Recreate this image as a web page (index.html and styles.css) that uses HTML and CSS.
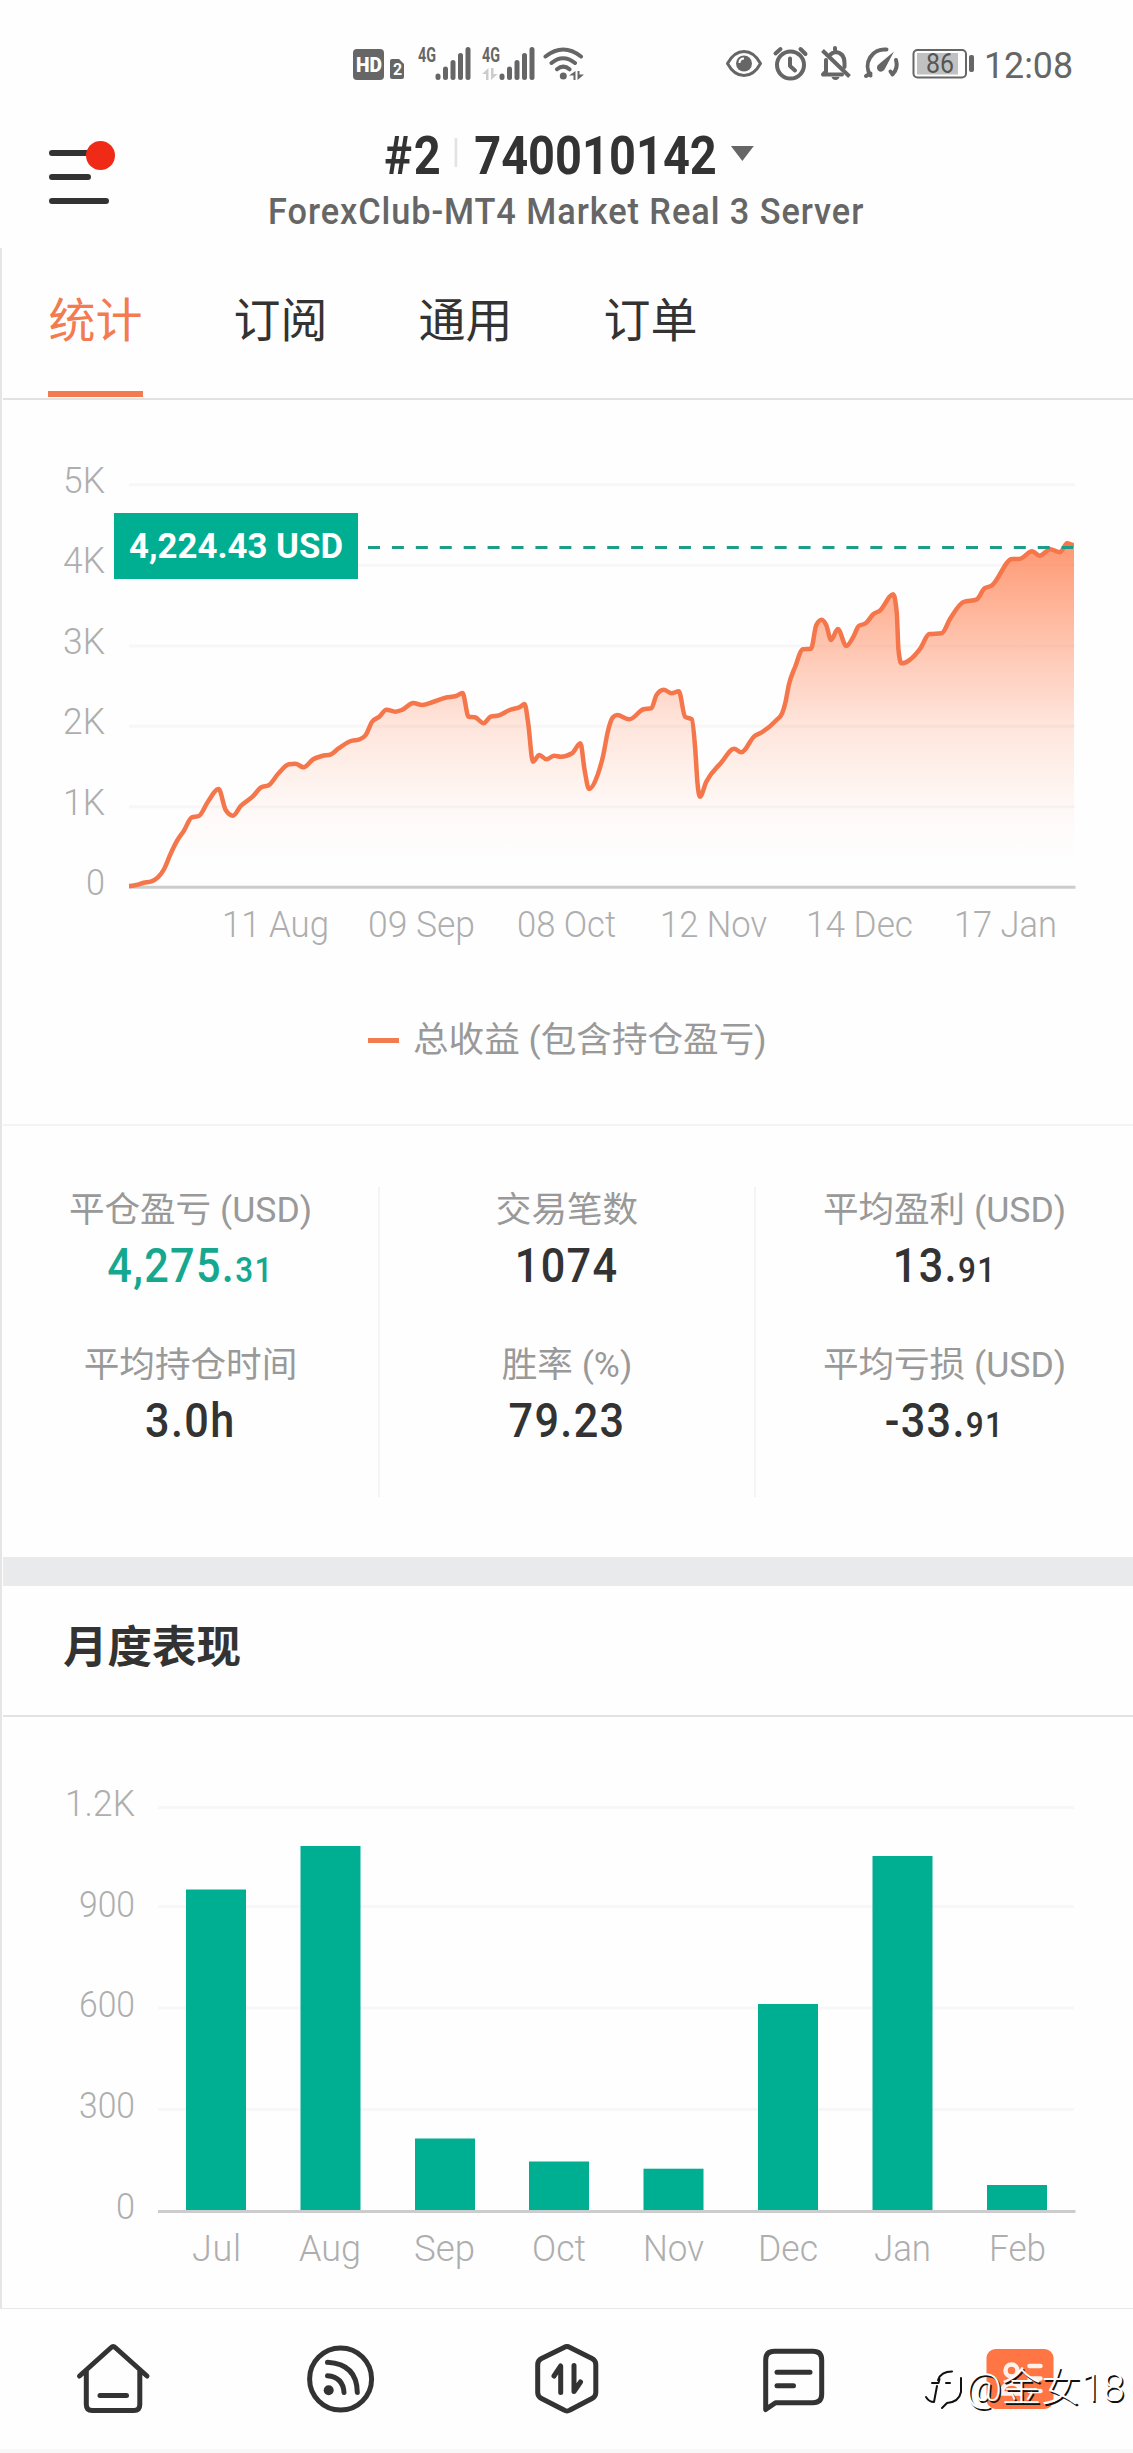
FILE: index.html
```html
<!DOCTYPE html>
<html lang="zh-CN">
<head>
<meta charset="utf-8">
<title>统计</title>
<link rel="stylesheet" href="styles.css">
</head>
<body>
<div class="status">
  <svg class="status-left" width="240" height="44" viewBox="345 40 240 44">
    <rect x="353" y="49" width="31" height="31" rx="4" fill="#666"/>
    <text x="356" y="71.5" class="hd" textLength="26" lengthAdjust="spacingAndGlyphs">HD</text>
    <path d="M392 59h7l5 5v13a2 2 0 0 1-2 2h-10a2 2 0 0 1-2-2V61a2 2 0 0 1 2-2z" fill="#666"/>
    <text x="393" y="75" class="sim">2</text>
    <text x="418" y="61.7" class="net" textLength="18" lengthAdjust="spacingAndGlyphs">4G</text>
    <g class="bars"><path d="M438 76v1.5M445.5 69v8.5M453 62.500v15M460.500 55.500v22M468 49.500v28"/></g>
    <text x="482" y="61.7" class="net" textLength="18" lengthAdjust="spacingAndGlyphs">4G</text>
    <g class="bars"><path d="M502 76v1.500M509.500 69v8.500M517 62.500v15M524.500 55.500v22M532 49.500v28"/></g>
    <path d="M488.500 68v12h-2.500v-6h-4zM491 80V68h2.500v6h4z" fill="#ccc"/>
    <g fill="none" stroke="#666" stroke-width="4" stroke-linecap="round"><path d="M545.500 56.500q17.800-14 35.500 0M551.500 63q11.500-9.500 23.500 0M557 69.300q6.300-5.500 12.500 0"/></g>
    <circle cx="563.300" cy="76" r="3.500" fill="#666"/>
    <path d="M575.500 71v9h-2v-4.500h-4.500zM577.500 80v-9h2v3.500h4.500z" fill="#666"/>
  </svg>
  <svg class="status-right" width="364" height="44" viewBox="720 40 364 44">
    <g fill="none" stroke="#666" stroke-width="3" stroke-linecap="round" stroke-linejoin="round">
      <path d="M727.500 63.500Q734 51.500 744 51.500T760.500 63.500Q754 75.500 744 75.500T727.500 63.500z"/>
      <circle cx="790.500" cy="65" r="13.500" stroke-width="4"/>
      <path d="M790 58.500v7.500l5 4.500M775.500 53.500l5-4.500M800.500 49l5 5" stroke-width="4"/>
      <path d="M822.500 50.500l27 26" stroke-width="4" stroke-linecap="butt"/>
      <path d="M826 60v11.500q-2 2-3 3h19M830.500 54.500q2-2 5-2.500M835 50v-2M835.500 52q9 1 9 11v4" stroke-width="4"/>
      <path d="M870.500 75.500a16.700 16.700 0 0 1 16-25.900M866 76l4.500-2.500M896 60q2.500 8-3.500 14.500l-2-3" stroke-width="4"/>
      <rect x="913.500" y="50" width="52.500" height="27.500" rx="4" stroke-width="2"/>
    </g>
    <circle cx="744" cy="63.500" r="8" fill="#666"/><path d="M739.500 63q0-4.500 4.500-4.500" fill="none" stroke="#fff" stroke-width="2"/>
    <path d="M831.500 77h8q-1 3-4 3t-4-3z" fill="#666"/>
    <path d="M894 51.500l-9.500 18a4 4 0 1 1-6-5z" fill="#666"/>
    <rect x="917" y="53" width="41" height="21.500" fill="#c1c1c1"/>
    <text x="926" y="73" class="batt" textLength="28" lengthAdjust="spacingAndGlyphs">86</text>
    <rect x="969" y="55" width="5" height="17" rx="2" fill="#666"/>
    <text x="984" y="78" class="clock" textLength="89" lengthAdjust="spacingAndGlyphs">12:08</text>
  </svg>
</div>

<header class="header">
  <svg class="menu" width="72" height="76" viewBox="46 140 72 76">
    <path d="M52 153h48M52 177h36M52 201h54" stroke="#333" stroke-width="6" stroke-linecap="round"/>
    <circle cx="100.500" cy="155.500" r="14.500" fill="#ef2b18"/>
  </svg>
  <div class="account">
    <div class="title"><span class="rank">#2</span><i class="sep"></i><span>740010142</span><i class="caret"></i></div>
    <div class="server">ForexClub-MT4 Market Real 3 Server</div>
  </div>
</header>

<main class="content">
  <nav class="tabs">
    <a class="tab active">统计</a><a class="tab">订阅</a><a class="tab">通用</a><a class="tab">订单</a>
  </nav>

  <section class="profit">
    <svg width="1130" height="560" viewBox="3 400 1130 560">
      <defs>
        <linearGradient id="fade" gradientUnits="userSpaceOnUse" x1="0" y1="543" x2="0" y2="887">
          <stop offset="0" stop-color="#ff7441" stop-opacity=".74"/>
          <stop offset=".3" stop-color="#ff7441" stop-opacity=".41"/>
          <stop offset=".53" stop-color="#ff7441" stop-opacity=".18"/>
          <stop offset=".77" stop-color="#ff7441" stop-opacity=".04"/>
          <stop offset=".92" stop-color="#ff7441" stop-opacity="0"/>
        </linearGradient>
      </defs>
      <path class="grid" d="M129 484.700H1075M129 565.300H1075M129 646H1075M129 726.300H1075M129 806.700H1075"/>
      <path class="axis" d="M129 887.300H1075.500"/>
      <path id="area" fill="url(#fade)"/>
      <path id="line" fill="none" stroke="#f4764a" stroke-width="4.500" stroke-linejoin="round"/>
      <path d="M368 547.500H1073" stroke="#1d9d88" stroke-width="3" stroke-dasharray="12 11.920"/>
      <g class="label">
        <text x="63" y="492.700" textLength="42" lengthAdjust="spacingAndGlyphs">5K</text>
        <text x="63" y="572.700" textLength="42" lengthAdjust="spacingAndGlyphs">4K</text>
        <text x="63" y="653.700" textLength="42" lengthAdjust="spacingAndGlyphs">3K</text>
        <text x="63" y="733.700" textLength="42" lengthAdjust="spacingAndGlyphs">2K</text>
        <text x="63" y="814.700" textLength="42" lengthAdjust="spacingAndGlyphs">1K</text>
        <text x="86" y="894.700" textLength="19" lengthAdjust="spacingAndGlyphs">0</text>
        <text x="222" y="936.700" textLength="107" lengthAdjust="spacingAndGlyphs">11 Aug</text>
        <text x="368" y="936.700" textLength="107" lengthAdjust="spacingAndGlyphs">09 Sep</text>
        <text x="517" y="936.700" textLength="99" lengthAdjust="spacingAndGlyphs">08 Oct</text>
        <text x="660" y="936.700" textLength="107" lengthAdjust="spacingAndGlyphs">12 Nov</text>
        <text x="806" y="936.700" textLength="107" lengthAdjust="spacingAndGlyphs">14 Dec</text>
        <text x="954" y="936.700" textLength="103" lengthAdjust="spacingAndGlyphs">17 Jan</text>
      </g>
      <rect x="114" y="513" width="244" height="66" fill="#00ae92"/>
      <text class="tag" x="129" y="557.700" textLength="214" lengthAdjust="spacingAndGlyphs">4,224.43 USD</text>
    </svg>
    <div class="legend"><i></i><span>总收益 (包含持仓盈亏)</span></div>
  </section>

  <section class="stats">
    <div class="col">
      <div class="stat"><label>平仓盈亏 (USD)</label><b class="green">4,275.<small>31</small></b></div>
      <div class="stat"><label>平均持仓时间</label><b>3.0h</b></div>
    </div>
    <div class="col">
      <div class="stat"><label>交易笔数</label><b>1074</b></div>
      <div class="stat"><label>胜率 (%)</label><b>79.23</b></div>
    </div>
    <div class="col">
      <div class="stat"><label>平均盈利 (USD)</label><b>13.<small>91</small></b></div>
      <div class="stat"><label>平均亏损 (USD)</label><b>-33.<small>91</small></b></div>
    </div>
  </section>

  <div class="band"></div>
  <h2 class="heading">月度表现</h2>

  <section class="monthly">
    <svg width="1130" height="591" viewBox="3 1717 1130 591">
      <path class="grid" d="M158 1807.500H1074M158 1906.500H1074M158 2008H1074M158 2109.500H1074"/>
      <path class="axis" d="M158 2211.500H1075.500"/>
      <g fill="#00ae92">
        <rect x="186" y="1889.500" width="60" height="320.500"/>
        <rect x="300.500" y="1846" width="60" height="364"/>
        <rect x="415" y="2138.500" width="60" height="71.500"/>
        <rect x="529" y="2161.500" width="60" height="48.500"/>
        <rect x="643.500" y="2168.700" width="60" height="41.300"/>
        <rect x="758" y="2004" width="60" height="206"/>
        <rect x="872.500" y="1856" width="60" height="354"/>
        <rect x="987" y="2185" width="60" height="25"/>
      </g>
      <g class="label">
        <text x="65" y="1816" textLength="70" lengthAdjust="spacingAndGlyphs">1.2K</text>
        <text x="79" y="1917" textLength="56" lengthAdjust="spacingAndGlyphs">900</text>
        <text x="79" y="2017" textLength="56" lengthAdjust="spacingAndGlyphs">600</text>
        <text x="79" y="2118" textLength="56" lengthAdjust="spacingAndGlyphs">300</text>
        <text x="116" y="2218.500" textLength="19" lengthAdjust="spacingAndGlyphs">0</text>
        <text x="192" y="2260.500" textLength="49" lengthAdjust="spacing">Jul</text>
        <text x="299" y="2260.500" textLength="62" lengthAdjust="spacingAndGlyphs">Aug</text>
        <text x="414" y="2260.500" textLength="61" lengthAdjust="spacingAndGlyphs">Sep</text>
        <text x="532" y="2260.500" textLength="54" lengthAdjust="spacingAndGlyphs">Oct</text>
        <text x="643" y="2260.500" textLength="61" lengthAdjust="spacingAndGlyphs">Nov</text>
        <text x="758" y="2260.500" textLength="60" lengthAdjust="spacingAndGlyphs">Dec</text>
        <text x="874" y="2260.500" textLength="57" lengthAdjust="spacingAndGlyphs">Jan</text>
        <text x="989" y="2260.500" textLength="57" lengthAdjust="spacingAndGlyphs">Feb</text>
      </g>
    </svg>
  </section>
</main>

<nav class="bottom">
  <a><svg width="80" height="80" viewBox="73.500 2339 80 80"><path d="M80 2376L111.700 2347.500q2-2 4 0L147.500 2376M86.800 2370v34.500q0 6 6 6h41.500q6 0 6-6V2370M100.500 2395.500h26.500"/></svg></a>
  <a><svg width="80" height="80" viewBox="300 2339 80 80"><circle cx="340.600" cy="2379" r="31"/><path d="M327.500 2362.300Q357 2364 357.300 2392.500M327.500 2375.700Q343 2377 344 2392.500"/><circle class="dot" cx="328.700" cy="2390.300" r="5"/></svg></a>
  <a><svg width="80" height="80" viewBox="526.500 2339 80 80"><path d="M564.500 2347.500q3-2 6 0L592.500 2358.500q3.800 2 3.800 6v28q0 4-3.800 6l-22 11.500q-3 2-6 0L542 2398.500q-3.800-2-3.800-6v-28q0-4 3.800-6zM554.500 2376L561.200 2366V2392.500M574.500 2365.500V2391.500L581 2382"/></svg></a>
  <a><svg width="80" height="80" viewBox="753 2339 80 80"><path d="M765.700 2409.500V2360q0-8.700 8.700-8.700h38.600q8.700 0 8.700 8.700v34q0 8.700-8.700 8.700H775.500zM777 2372.300h33M777 2385.700h16.500"/></svg></a>
  <a>
    <svg width="80" height="80" viewBox="979.500 2339 80 80"><rect class="fill" x="986" y="2349" width="67" height="60" rx="9"/><g class="card"><circle cx="1011" cy="2370.500" r="6"/><path d="M1029 2366h11M1029 2378.500h11M1001 2393.500q1-10 10-10t10 10zM1029 2391h11"/></g></svg>
    <span class="mark"><svg width="42" height="44" viewBox="920 2373 42 44"><g fill="none" stroke="#111" stroke-width="2"><path d="M936 2386q3-8.500 14-8.500M959 2384v14q-2 10-14 11l-5 5M930 2389h6.500l1-4M944 2389h4M935 2392l-3 16q-5 0-8-5"/></g></svg><span>@金女18</span></span>
  </a>
</nav>
<script src="chart.js"></script>
</body>
</html>
```
FILE: styles.css
```css
* { box-sizing: border-box; }
body { margin: 0; width: 1133px; height: 2453px; background: #fefefe; color: #333; display: flex; flex-direction: column; overflow: hidden; font-family: Roboto, "Noto Sans CJK SC", sans-serif; }
svg { display: block; flex: none; }
i { font-style: normal; }
svg text { font-family: Roboto, "Noto Sans CJK SC", sans-serif; }

.status { height: 100px; padding: 40px 49px 0 345px; display: flex; justify-content: space-between; }
.hd { font-size: 21px; font-weight: 900; fill: #fff; }
.sim { font-size: 16px; font-weight: 700; fill: #fff; }
.net { font-size: 20.500px; font-weight: 700; fill: #666; }
.bars { fill: none; stroke: #666; stroke-width: 5; stroke-linecap: round; }
.batt { font-size: 27px; fill: #555; }
.clock { font-size: 36px; fill: #666; }

.header { height: 148px; padding: 0 46px; display: grid; grid-template-columns: 72px 1fr 72px; }
.menu { margin-top: 40px; }
.account { display: flex; flex-direction: column; align-items: center; }
.title { display: flex; align-items: flex-start; height: 62px; margin: 25px 0 0 4px; font-size: 53.400px; line-height: 62px; font-weight: 700; white-space: nowrap; transform: scaleX(.88); }
.rank { letter-spacing: 2px; }
.sep { width: 3px; height: 29px; margin: 13px 19px 0 14px; background: #e3e3e3; }
.caret { margin: 21px 0 0 16px; border: 13px solid transparent; border-top: 15px solid #666; border-bottom: 0; }
.server { height: 44px; margin-top: 3px; font-size: 36.500px; line-height: 44px; font-weight: 500; color: #666; white-space: nowrap; letter-spacing: 1px; transform: scaleX(.94); }

.content { height: 2060px; border-left: 2px solid #e5e5e5; padding-left: 1px; display: flex; flex-direction: column; }
.tabs { height: 152px; border-bottom: 2px solid #e2e2e2; padding-left: 45px; display: flex; gap: 90px; }
.tab { width: 95px; height: 149px; font-size: 47px; line-height: 146px; text-align: center; white-space: nowrap; font-weight: 400; }
.active { color: #f27b50; border-bottom: 6px solid #f27b50; }
.grid { fill: none; stroke: #f7f7f7; stroke-width: 3; }
.axis { stroke: #ccc; stroke-width: 3; }
.label { font-size: 36px; font-weight: 300; fill: #aeaeae; }
.tag { font-size: 35.500px; font-weight: 700; fill: #fff; }
.profit { height: 726px; border-bottom: 2px solid #f3f3f3; }
.legend { height: 60px; margin-top: 50px; padding-left: 365px; display: flex; align-items: center; gap: 14px; font-size: 35.600px; line-height: 60px; color: #999; white-space: nowrap; }
.legend i { width: 31px; height: 5px; background: #f27b50; }

.stats { height: 431px; padding: 61px 0; display: grid; grid-template-columns: 377px 376px 377px; }
.col { border-right: 2px solid #f4f4f4; }
.col:last-child { border: 0; }
.stat { height: 155px; padding-top: 1px; display: flex; flex-direction: column; align-items: center; white-space: nowrap; }
.stat label { font-size: 35.600px; line-height: 44px; color: #999; }
.stat b { font-size: 48px; line-height: 56px; margin-top: 6px; font-weight: 500; letter-spacing: 1.500px; transform: scaleX(.9); }
.stat small { font-size: 35px; }
.stat .green { color: #15a88f; }
.band { height: 29px; background: #e9eaec; }
.heading { height: 131px; margin: 0; padding-left: 60px; border-bottom: 2px solid #e2e2e2; font-size: 44.500px; line-height: 125px; font-weight: 700; }

.bottom { height: 145px; border-top: 1px solid #e8e8e8; border-bottom: 4px solid #f8f8f8; display: grid; grid-template-columns: repeat(5, 1fr); justify-items: center; padding-top: 30px; }
.bottom a { position: relative; }
.bottom svg { fill: none; stroke: #333; stroke-width: 5; stroke-linecap: round; stroke-linejoin: round; }
.bottom .dot { fill: #333; stroke: none; }
.bottom .fill { fill: #ff7543; stroke: none; }
.card { stroke: #fff2ec; stroke-width: 4.500; }
.mark { position: absolute; left: -58px; top: 28px; display: flex; font-size: 39.500px; line-height: 42px; font-weight: 300; color: #fff; text-shadow: 1.500px 1.500px 0 #111; white-space: nowrap; }
.mark > span { margin-left: 2px; }
```
FILE: chart.js
```js
// Cumulative profit samples as x,y pairs in chart units.
const raw = `129,886 136.4,885 143.6,882.7 151.4,881.3 157.9,877.3 164.3,868.7 170.4,854.3 177.5,840 183.9,830.7 191.8,817.3 198.9,816 207.9,801.7 218.6,789 225.7,810 232.9,815.7 240.7,806 252.5,796.7 261.4,787.3 268.6,785.3 278.6,773.3 288.9,764.3 295.4,763.7 303.6,767.3 313.2,759.3 322.1,756 331,754.3 338.2,748.7 350.7,741 359.6,739.3 365.7,735 372.1,721.7 379.3,716.7 386.4,709.7 395.4,711.7 402.5,709.7 413.2,703 422.1,705 432.9,702 445.4,697.7 456.1,696 462.5,693 468.6,716.7 475,717.3 483.6,723.3 490.7,716.7 498.9,715.3 509.6,710 520.4,706.7 524.6,704 528.2,723.3 532.9,761.7 539.3,755 546.4,759.3 554.3,755.7 560.7,756.7 572.1,753.3 580.4,743.3 584.6,770 589,789 597.6,775 602.9,756.7 608.2,730 612.5,717.7 617,715 629.4,719.3 643.5,709.3 651.3,708.3 656.5,695 663.6,689.7 671.7,693.3 678.8,691.3 685.1,716.7 691.8,719.3 695.3,750 697.5,783.3 699.9,796.7 706.3,781.7 721.1,762.7 734.1,748.7 741.2,752.3 754.6,736 761.7,732.3 775.8,720.7 782.1,713.3 785.6,701.7 788.8,685 795.2,666.7 802.9,649.3 811,648.7 816.3,625 821.6,619.7 826.2,625 831.1,640 837.8,629 846.3,646 853.4,636.7 858.7,626 865.7,623.3 873.5,614 879.8,610.7 893.2,594.3 896.8,613.3 898.5,650 901.3,663.3 920.4,648.3 929.2,634 941.6,633.3 950.4,618.3 963.4,602 976.8,599.3 984.6,588.3 991.6,585.7 1012.1,559 1019.2,559 1032.2,551.3 1039.6,555.7 1050.2,549.3 1060.1,552.3 1067.1,543.3 1074,545.3`;
const pts = raw.split(' ').map(p => p.split(',').map(Number));
const slope = pts.map((p, i) => {
  if (i === 0 || i === pts.length - 1) return 0;
  const h0 = p[0] - pts[i - 1][0], h1 = pts[i + 1][0] - p[0];
  const s0 = (p[1] - pts[i - 1][1]) / h0, s1 = (pts[i + 1][1] - p[1]) / h1;
  if (s0 * s1 <= 0) return 0;
  return Math.sign(s0) * Math.min(Math.abs(s0) * 2, Math.abs(s1) * 2, Math.abs((s0 * h1 + s1 * h0) / (h0 + h1)));
});
let d = `M${pts[0]}`;
for (let i = 1; i < pts.length; i++) {
  const [x0, y0] = pts[i - 1], [x1, y1] = pts[i], t = (x1 - x0) / 3;
  d += `C${x0 + t},${y0 + t * slope[i - 1]} ${x1 - t},${y1 - t * slope[i]} ${x1},${y1}`;
}
document.getElementById('line').setAttribute('d', d);
document.getElementById('area').setAttribute('d', `${d}V886H129Z`);
```
